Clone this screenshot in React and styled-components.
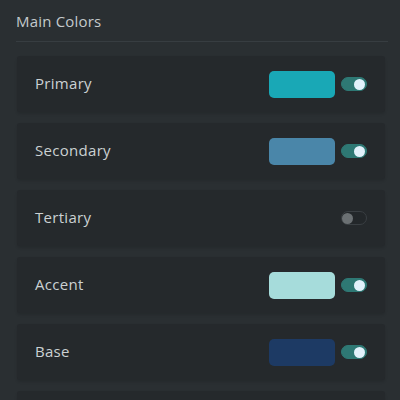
import styled, { createGlobalStyle } from "styled-components";

const GlobalStyle = createGlobalStyle`
  html, body {
    margin: 0;
    padding: 0;
    background: #2a2f32;
    font-family: "Open Sans", "Noto Sans", sans-serif;
  }
`;

const Page = styled.div`
  width: 400px;
  height: 400px;
  overflow: hidden;
  background: #2a2f32;
  padding: 0 12px 0 16px;
  box-sizing: border-box;
`;

const Title = styled.h2`
  margin: 0;
  padding-top: 11px;
  height: 42px;
  box-sizing: border-box;
  font-size: 15px;
  line-height: 20px;
  font-weight: 400;
  color: #c4cacc;
  letter-spacing: 0.2px;
  border-bottom: 1px solid #373d41;
`;

const List = styled.div`
  display: flex;
  flex-direction: column;
  gap: 11px;
  padding: 14px 3px 0 1px;
`;

const Card = styled.div`
  height: 56px;
  flex-shrink: 0;
  display: flex;
  align-items: center;
  padding: 0 18px;
  background: #25292c;
  border-radius: 3px;
  box-shadow: 0 2px 3px rgba(0, 0, 0, 0.12);
`;

const Label = styled.span`
  flex: 1;
  font-size: 15px;
  line-height: 20px;
  margin-top: -3px;
  color: #cbd1d3;
  letter-spacing: 0.3px;
`;

const Swatch = styled.div`
  width: 66px;
  height: 27px;
  border-radius: 5px;
  background: ${(p) => p.$color};
  margin-right: 6px;
`;

const Toggle = styled.div`
  width: 26px;
  height: 14px;
  border-radius: 7px;
  box-sizing: border-box;
  display: flex;
  align-items: center;
  justify-content: ${(p) => (p.$on ? "flex-end" : "flex-start")};
  padding: 0 2px;
  background: ${(p) => (p.$on ? "#2e7874" : "#23272a")};
  border: 1px solid ${(p) => (p.$on ? "#2e7874" : "#3a3f43")};
`;

const Knob = styled.div`
  width: 11px;
  height: 11px;
  border-radius: 50%;
  margin: ${(p) => (p.$on ? "0 -1px 0 0" : "0 0 0 -2px")};
  background: ${(p) => (p.$on ? "#e2f1fb" : "#6b7073")};
`;

const colors = [
  { name: "Primary", color: "#19a8b6", on: true },
  { name: "Secondary", color: "#4a86a9", on: true },
  { name: "Tertiary", color: null, on: false },
  { name: "Accent", color: "#a6dcdb", on: true },
  { name: "Base", color: "#1d3a64", on: true },
];

export default function App() {
  return (
    <Page>
      <GlobalStyle />
      <Title>Main Colors</Title>
      <List>
        {colors.map((c) => (
          <Card key={c.name}>
            <Label>{c.name}</Label>
            {c.color && <Swatch $color={c.color} />}
            <Toggle $on={c.on}>
              <Knob $on={c.on} />
            </Toggle>
          </Card>
        ))}
        <Card />
      </List>
    </Page>
  );
}
